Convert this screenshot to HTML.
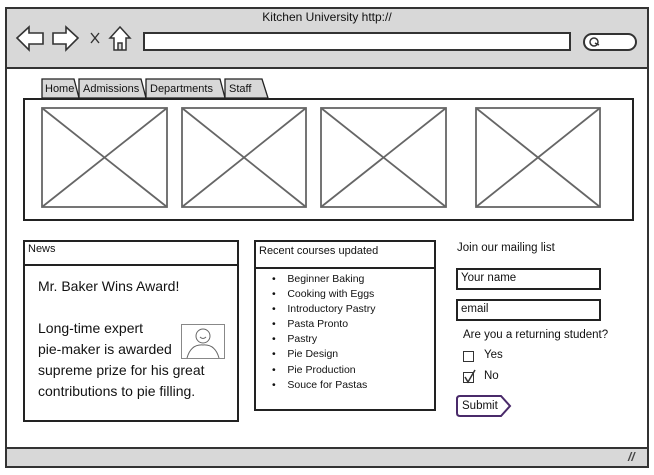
<!DOCTYPE html>
<html><head><meta charset="utf-8"><style>
*{margin:0;padding:0;box-sizing:border-box}
body{width:654px;height:475px;background:#fff;position:relative;overflow:hidden;font-family:"Liberation Sans",sans-serif;color:#111}
.a{position:absolute}
.b{border:2px solid #222}
.ph{position:absolute;border:2px solid #555;background:#fff}
.t{font-size:12px;white-space:nowrap}
</style></head><body>
<div class="a b" style="left:5px;top:7px;width:644px;height:461px;border-color:#333"></div>
<div class="a" style="left:7px;top:9px;width:640px;height:60px;background:#d8d8d8;border-bottom:2px solid #333"></div>
<div class="a t" style="left:0;width:654px;text-align:center;top:10px;font-size:12px">Kitchen University http://</div>
<svg class="a" style="left:14px;top:24px" width="125" height="30">
<path d="M3 14 L15 3 L15 9 L29 9 L29 20 L15 20 L15 26 Z" fill="#fff" stroke="#333" stroke-width="1.6"/>
<path d="M64 14 L52 3 L52 9 L39 9 L39 20 L52 20 L52 26 Z" fill="#fff" stroke="#333" stroke-width="1.6"/>
<path d="M77 9 L85 19 M85 9 L77 19" stroke="#333" stroke-width="1.4"/>
<path d="M106 3 L96 14 L100 14 L100 26 L112 26 L112 14 L116 14 Z M104 26 L104 19 L108 19 L108 26" fill="#fff" stroke="#333" stroke-width="1.5"/>
</svg>
<div class="a" style="left:143px;top:32px;width:428px;height:19px;background:#fff;border:2px solid #333"></div>
<div class="a" style="left:583px;top:33px;width:54px;height:18px;background:#fff;border:2px solid #333;border-radius:9px"></div>
<svg class="a" style="left:588px;top:36px" width="14" height="12"><circle cx="6" cy="6" r="4" fill="none" stroke="#333" stroke-width="1.5"/><path d="M7 7 L11 9" stroke="#333" stroke-width="1.5"/></svg>
<div class="a" style="left:7px;top:447px;width:640px;height:19px;background:#d8d8d8;border-top:2px solid #333"></div>
<div class="a" style="left:628px;top:450px;font-size:12px;font-weight:bold;font-style:italic;color:#444">//</div>
<!-- tabs -->
<svg class="a" style="left:40px;top:76px" width="232" height="24">
<g fill="#d8d8d8" stroke="#222" stroke-width="1.3">
<path d="M2 22 L2 3 L34 3 L39 22 Z"/>
<path d="M39 22 L39 3 L101 3 L106 22 Z"/>
<path d="M106 22 L106 3 L180 3 L185 22 Z"/>
<path d="M185 22 L185 3 L222 3 L228 22 Z"/>
</g></svg>
<div class="a t" style="left:45px;top:83px;font-size:11px">Home</div>
<div class="a t" style="left:83px;top:83px;font-size:11px">Admissions</div>
<div class="a t" style="left:150px;top:83px;font-size:11px">Departments</div>
<div class="a t" style="left:229px;top:83px;font-size:11px">Staff</div>
<div class="a b" style="left:23px;top:98px;width:611px;height:123px"></div>
<svg class="a" style="left:0;top:0" width="654" height="475">
<g fill="#fff" stroke="#666" stroke-width="1.8">
<rect x="42" y="108" width="125" height="99"/><path d="M42 108 L167 207 M167 108 L42 207"/>
<rect x="182" y="108" width="124" height="99"/><path d="M182 108 L306 207 M306 108 L182 207"/>
<rect x="321" y="108" width="125" height="99"/><path d="M321 108 L446 207 M446 108 L321 207"/>
<rect x="476" y="108" width="124" height="99"/><path d="M476 108 L600 207 M600 108 L476 207"/>
</g></svg>
<!-- news -->
<div class="a b" style="left:23px;top:240px;width:216px;height:26px"></div>
<div class="a b" style="left:23px;top:264px;width:216px;height:158px"></div>
<div class="a t" style="left:28px;top:243px;font-size:11px">News</div>
<div class="a t" style="left:38px;top:278px;font-size:14px">Mr. Baker Wins Award!</div>
<div class="a" style="left:38px;top:318px;font-size:14px;line-height:21px;white-space:nowrap">Long-time expert<br>pie-maker is awarded<br>supreme prize for his great<br>contributions to pie filling.</div>
<svg class="a" style="left:181px;top:324px" width="44" height="35"><rect x="0.5" y="0.5" width="43" height="34" fill="#fff" stroke="#888"/><circle cx="22" cy="12" r="7" fill="none" stroke="#666"/><path d="M19 13 Q22 16 25 13" fill="none" stroke="#666"/><path d="M6 34 Q10 20 22 21 Q34 20 38 34" fill="none" stroke="#666"/></svg>
<!-- courses -->
<div class="a b" style="left:254px;top:240px;width:182px;height:29px"></div>
<div class="a b" style="left:254px;top:267px;width:182px;height:144px"></div>
<div class="a t" style="left:259px;top:245px;font-size:11px">Recent courses updated</div>
<div class="a" style="left:272px;top:272px;font-size:10.5px;line-height:15.1px;white-space:nowrap">
•&nbsp;&nbsp;&nbsp;&nbsp;Beginner Baking<br>•&nbsp;&nbsp;&nbsp;&nbsp;Cooking with Eggs<br>•&nbsp;&nbsp;&nbsp;&nbsp;Introductory Pastry<br>•&nbsp;&nbsp;&nbsp;&nbsp;Pasta Pronto<br>•&nbsp;&nbsp;&nbsp;&nbsp;Pastry<br>•&nbsp;&nbsp;&nbsp;&nbsp;Pie Design<br>•&nbsp;&nbsp;&nbsp;&nbsp;Pie Production<br>•&nbsp;&nbsp;&nbsp;&nbsp;Souce for Pastas</div>
<!-- mailing -->
<div class="a t" style="left:457px;top:242px;font-size:11.5px">Join our mailing list</div>
<div class="a b" style="left:456px;top:268px;width:145px;height:22px"></div>
<div class="a t" style="left:461px;top:272px;font-size:11.5px">Your name</div>
<div class="a b" style="left:456px;top:299px;width:145px;height:22px"></div>
<div class="a t" style="left:461px;top:303px;font-size:11.5px">email</div>
<div class="a t" style="left:463px;top:329px;font-size:11.5px">Are you a returning student?</div>
<div class="a" style="left:463px;top:351px;width:11px;height:11px;border:1.5px solid #333"></div>
<div class="a t" style="left:484px;top:349px;font-size:11.5px">Yes</div>
<div class="a" style="left:463px;top:372px;width:11px;height:11px;border:1.5px solid #333"></div>
<svg class="a" style="left:462px;top:368px" width="16" height="16"><path d="M3 9 L6 14 L13 2" fill="none" stroke="#333" stroke-width="1.5"/></svg>
<div class="a t" style="left:484px;top:370px;font-size:11.5px">No</div>
<svg class="a" style="left:455px;top:394px" width="60" height="25"><path d="M5 2 L46 2 L55 12 L46 22 L5 22 Q2 22 2 19 L2 5 Q2 2 5 2 Z" fill="#fff" stroke="#4a2a6a" stroke-width="2"/></svg>
<div class="a t" style="left:462px;top:400px;font-size:11.5px">Submit</div>
</body></html>
